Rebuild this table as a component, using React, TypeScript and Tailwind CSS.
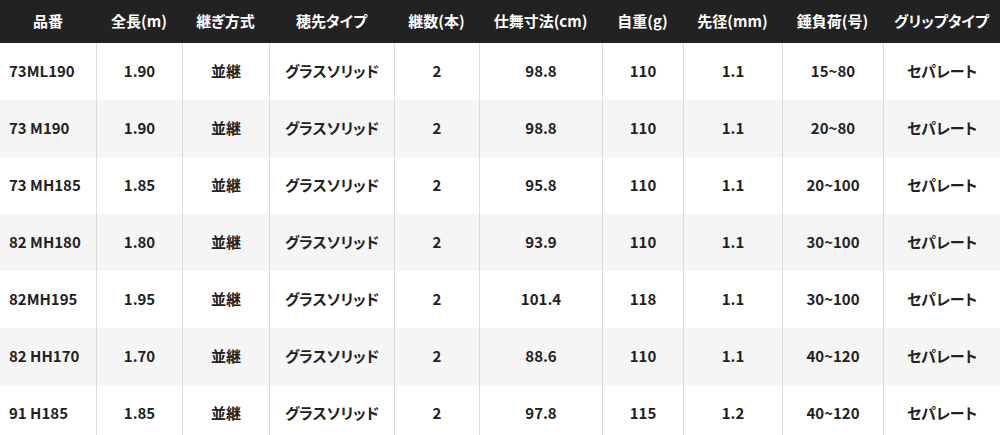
const headers = ['品番', '全長(m)', '継ぎ方式', '穂先タイプ', '継数(本)', '仕舞寸法(cm)', '自重(g)', '先径(mm)', '錘負荷(号)', 'グリップタイプ'];

const rows = [
  ['73ML190', '1.90', '並継', 'グラスソリッド', '2', '98.8', '110', '1.1', '15~80', 'セパレート'],
  ['73 M190', '1.90', '並継', 'グラスソリッド', '2', '98.8', '110', '1.1', '20~80', 'セパレート'],
  ['73 MH185', '1.85', '並継', 'グラスソリッド', '2', '95.8', '110', '1.1', '20~100', 'セパレート'],
  ['82 MH180', '1.80', '並継', 'グラスソリッド', '2', '93.9', '110', '1.1', '30~100', 'セパレート'],
  ['82MH195', '1.95', '並継', 'グラスソリッド', '2', '101.4', '118', '1.1', '30~100', 'セパレート'],
  ['82 HH170', '1.70', '並継', 'グラスソリッド', '2', '88.6', '110', '1.1', '40~120', 'セパレート'],
  ['91 H185', '1.85', '並継', 'グラスソリッド', '2', '97.8', '115', '1.2', '40~120', 'セパレート'],
];

const cols = 'grid grid-cols-[96px_86px_87px_125px_85px_123px_81px_99px_101px_117px]';

export default function App() {
  return (
    <div className="w-[1000px] h-[435px] overflow-hidden bg-white font-['Noto_Sans_CJK_JP','Noto_Sans',sans-serif] font-bold text-[15px] text-[#222] [font-feature-settings:'palt']">
      <div className={`${cols} h-[43px] bg-[#222] text-white`}>
        {headers.map((h) => (
          <div key={h} className="flex items-center justify-center">
            {h}
          </div>
        ))}
      </div>
      {rows.map((row, i) => (
        <div key={i} className={`${cols} h-[57px] ${i % 2 === 1 ? 'bg-[#f5f5f5]' : 'bg-white'}`}>
          {row.map((cell, j) => (
            <div
              key={j}
              className={
                j === 0
                  ? 'flex items-center pl-[9px]'
                  : 'flex items-center justify-center border-l border-[#dcdcdc]'
              }
            >
              {cell}
            </div>
          ))}
        </div>
      ))}
    </div>
  );
}
